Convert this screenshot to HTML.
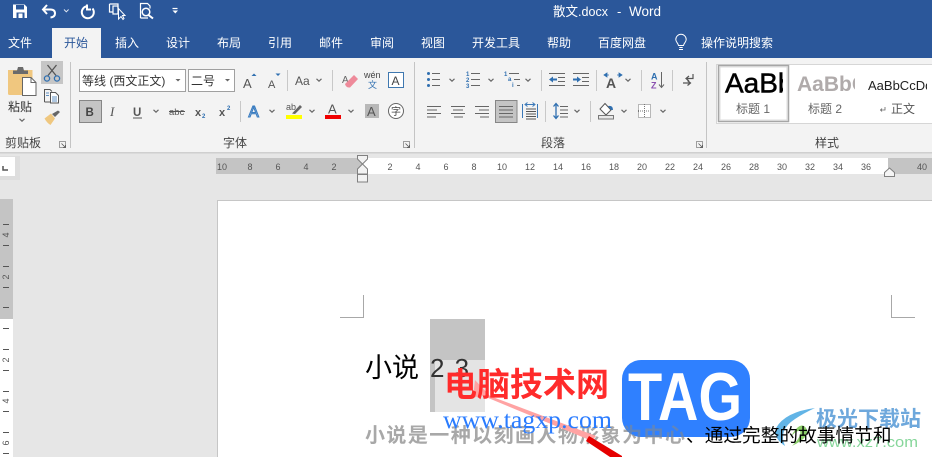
<!DOCTYPE html>
<html><head><meta charset="utf-8"><style>
html,body{margin:0;padding:0;width:932px;height:457px;overflow:hidden;background:#e6e6e6}
svg{display:block}
text{font-family:"Liberation Sans","Noto Sans CJK SC",sans-serif}
.tab{font-size:12px;fill:#fff}
.lab{font-size:12px;fill:#444}
.rn{font-size:9px;fill:#555}
</style></head><body>
<svg width="932" height="457" viewBox="0 0 932 457" xmlns="http://www.w3.org/2000/svg">
<defs>
<path id="chev" d="M-2.5 -1.2L0 1.2L2.5 -1.2" fill="none" stroke="#666" stroke-width="1.2"/>
<clipPath id="c1"><rect x="722" y="66" width="61" height="40"/></clipPath>
<clipPath id="c2"><rect x="794" y="66" width="61" height="40"/></clipPath>
<clipPath id="c3"><rect x="866" y="66" width="61" height="40"/></clipPath>
<clipPath id="tagc"><rect x="622" y="360" width="128" height="77" rx="19"/></clipPath>
</defs>
<!-- title bar -->
<rect width="932" height="58" fill="#2b579a"/>
<rect x="52" y="28" width="49" height="30" fill="#f3f3f3"/>
<rect y="58" width="932" height="94" fill="#f3f3f3"/>
<rect y="152" width="932" height="1.5" fill="#cfcfcf"/>
<!-- QAT -->
<path d="M13 4.500h11.500l2.500 2.500V18H13z" fill="#fff"/><rect x="16" y="5" width="8" height="4.500" fill="#2b579a"/><rect x="16.500" y="12.500" width="8" height="5.500" fill="#2b579a"/><rect x="18.500" y="13.500" width="4" height="4.500" fill="#fff"/>
<path d="M47 5L43 9.500L47 14M43.500 9.500H50.500Q55 9.500 55 13.500Q55 17 50.500 17.500" fill="none" stroke="#fff" stroke-width="2"/>
<path d="M64 9.500l2.300 2.300 2.300-2.300" fill="none" stroke="#dfe6f2" stroke-width="1"/>
<path d="M87 6.300A6 6 0 1 0 92.500 8.500M87 4.500V9.500H91" fill="none" stroke="#fff" stroke-width="2"/>
<path d="M109.500 4H118V8M109.500 4V12H113" fill="none" stroke="#fff" stroke-width="1.200"/><rect x="113" y="6" width="5" height="8" fill="none" stroke="#fff" stroke-width="1.200"/>
<path d="M118.500 8.500V19L121 16.500L123 19.500L124 18.500L122.500 15.500H125z" fill="#2b579a" stroke="#fff" stroke-width="1"/>
<path d="M140.500 18V3.500H147.500L150 6V8.500M140.500 18H148" fill="none" stroke="#fff" stroke-width="1.200"/><circle cx="146" cy="12" r="3.800" fill="none" stroke="#fff" stroke-width="1.500"/><path d="M148.500 15L153 18.500" stroke="#fff" stroke-width="2"/>
<path d="M172.500 8.500h5" stroke="#fff" stroke-width="1.200"/><path d="M172.500 10.500h5.500l-2.700 3z" fill="#fff"/>
<text x="553" y="16" font-size="13" fill="#fff" textLength="55" lengthAdjust="spacingAndGlyphs">散文.docx</text>
<text x="617" y="16" font-size="13" fill="#fff">-</text>
<text x="629" y="16" font-size="14" fill="#fff" textLength="32" lengthAdjust="spacingAndGlyphs">Word</text>
<!-- tabs -->
<text class="tab" x="8" y="47">文件</text>
<text class="tab" x="64" y="47" style="fill:#2b579a">开始</text>
<text class="tab" x="115" y="47">插入</text>
<text class="tab" x="166" y="47">设计</text>
<text class="tab" x="217" y="47">布局</text>
<text class="tab" x="268" y="47">引用</text>
<text class="tab" x="319" y="47">邮件</text>
<text class="tab" x="370" y="47">审阅</text>
<text class="tab" x="421" y="47">视图</text>
<text class="tab" x="472" y="47">开发工具</text>
<text class="tab" x="547" y="47">帮助</text>
<text class="tab" x="598" y="47">百度网盘</text>
<path d="M679 49.500h4M679.300 47.500h3.400M678.500 45.500C678 43 675.800 42 675.800 39.500A5.200 5.200 0 0 1 686.200 39.500C686.200 42 684 43 683.500 45.500z" fill="none" stroke="#fff" stroke-width="1"/>
<text class="tab" x="701" y="47">操作说明搜索</text>
<!-- clipboard group -->
<path d="M8 70h24.500v16h-10.500v9H9.500Q8 95 8 93.500z" fill="#f0c77f"/>
<path d="M13 70.500h4l1-3.500h5l1 3.500h4v3.500H13z" fill="#6b6b6b"/>
<path d="M22.500 77.500H31L36 82.500V95.500H22.500z" fill="#fff" stroke="#666" stroke-width="1"/>
<path d="M31 77.500V82.500H36" fill="none" stroke="#666" stroke-width="1"/>
<text x="8" y="111" font-size="12" fill="#333">粘贴</text>
<use href="#chev" x="22" y="120"/>
<rect x="41" y="61" width="22" height="23" fill="#c6c6c6"/>
<path d="M47.500 65L56 75.500M56.500 65L48 75.500" stroke="#555" stroke-width="1.300"/>
<circle cx="47" cy="78.500" r="2.600" fill="none" stroke="#2f6fb0" stroke-width="1.300"/><circle cx="57" cy="78.500" r="2.600" fill="none" stroke="#2f6fb0" stroke-width="1.300"/>
<path d="M44.500 102V89.500H50L52 91.500M50 102H44.500" fill="none" stroke="#555" stroke-width="1"/>
<path d="M50.500 92.500H55.500L58.500 95.500V103H50.500z" fill="#fff" stroke="#555" stroke-width="1"/>
<path d="M52 97h5M52 99h5M52 101h5M46 93h3M46 95.500h3" stroke="#2f6fb0" stroke-width=".8"/>
<path d="M44.500 118.500L51 113.500L55 118.500L50.500 125Q47 123 44.500 118.500z" fill="#efc77f"/><path d="M52 114L58 110.500L60 112L55 117z" fill="#666"/>
<text class="lab" x="5" y="147">剪贴板</text>
<rect x="59.500" y="141.500" width="6" height="6" fill="none" stroke="#888" stroke-width=".8"/><path d="M61.500 143.500L65.500 147.500M65.500 145v2.500H63" fill="none" stroke="#555" stroke-width=".8"/>
<rect x="70" y="62" width="1" height="86" fill="#c4c4c4"/>
<!-- font group -->
<rect x="79.500" y="69.500" width="106" height="22" fill="#fff" stroke="#a0a0a0"/>
<text x="82" y="85" font-size="12" fill="#333">等线 (西文正文)</text>
<path d="M175.500 79h5l-2.500 2.500z" fill="#666"/>
<rect x="188.500" y="69.500" width="46" height="22" fill="#fff" stroke="#a0a0a0"/>
<text x="191" y="85" font-size="12" fill="#333">二号</text>
<path d="M225 79h5l-2.500 2.500z" fill="#666"/>
<text x="243" y="88" font-size="13" fill="#555">A</text><path d="M251.500 76h5l-2.500-2.500z" fill="#2f6fb0"/>
<text x="268" y="88" font-size="11" fill="#555">A</text><path d="M275.500 73.500h5l-2.500 2.500z" fill="#2f6fb0"/>
<rect x="287" y="70" width="1" height="21" fill="#c8c8c8"/>
<text x="295" y="85" font-size="12" fill="#555">Aa</text>
<use href="#chev" x="319" y="80"/>
<rect x="332" y="70" width="1" height="21" fill="#c8c8c8"/>
<text x="342" y="83" font-size="10" fill="#666">A</text><path d="M345 84L354 75L358 79L350 87.500Q346 88 345 84z" fill="#ee8a9a"/>
<text x="364" y="78" font-size="9" fill="#444">wén</text><text x="368" y="88" font-size="9" fill="#2f6fb0">文</text>
<rect x="388.500" y="72.500" width="15" height="15" fill="#fff" stroke="#3f78b0"/><text x="391.500" y="85" font-size="12" fill="#444">A</text>
<rect x="79.500" y="100.500" width="22" height="22" fill="#c4c4c4" stroke="#868686"/>
<text x="85.500" y="116" font-size="11.500" font-weight="bold" fill="#444">B</text>
<text x="110" y="116" font-size="13" font-style="italic" fill="#555" style="font-family:'Liberation Serif',serif">I</text>
<text x="133" y="116" font-size="11.500" font-weight="bold" fill="#555">U</text><rect x="133" y="117.500" width="9" height="1" fill="#555"/>
<use href="#chev" x="156" y="111"/>
<text x="169" y="115" font-size="9.500" fill="#555">abc</text><rect x="169" y="111" width="16" height="1" fill="#555"/>
<text x="195" y="116" font-size="11" font-weight="bold" fill="#555">x</text><text x="202" y="118" font-size="6" font-weight="bold" fill="#2f6fb0">2</text>
<text x="219" y="116" font-size="11" font-weight="bold" fill="#555">x</text><text x="227" y="110" font-size="6" font-weight="bold" fill="#2f6fb0">2</text>
<rect x="240" y="101" width="1" height="21" fill="#c8c8c8"/>
<text x="248.500" y="117" font-size="15.500" fill="#fff" stroke="#3a7cc0" stroke-width="1.100">A</text>
<use href="#chev" x="272" y="111"/>
<text x="286" y="110" font-size="9" fill="#555">ab</text><path d="M292 113.500L300 105L302 107L295 114z" fill="#666"/><rect x="286" y="115" width="16" height="4" fill="#ffff00"/>
<use href="#chev" x="312" y="111"/>
<text x="328" y="113.500" font-size="13" fill="#555">A</text><rect x="325" y="115" width="16" height="4" fill="#f00000"/>
<use href="#chev" x="351" y="111"/>
<rect x="365" y="104" width="14" height="14" fill="#b8b8b8"/><text x="367" y="116" font-size="13" fill="#555">A</text>
<circle cx="396" cy="111" r="7.500" fill="#fff" stroke="#666" stroke-width="1"/><text x="391" y="115" font-size="10" fill="#444">字</text>
<text class="lab" x="223" y="147">字体</text>
<rect x="403.500" y="141.500" width="6" height="6" fill="none" stroke="#888" stroke-width=".8"/><path d="M405.500 143.500L409.500 147.500M409.500 145v2.500H407" fill="none" stroke="#555" stroke-width=".8"/>
<rect x="414" y="62" width="1" height="86" fill="#c4c4c4"/>
<!-- paragraph group -->
<g fill="#2f6fb0"><circle cx="428.500" cy="73.500" r="1.500"/><circle cx="428.500" cy="79.500" r="1.500"/><circle cx="428.500" cy="85.500" r="1.500"/></g>
<path d="M432 73.500h8M432 79.500h8M432 85.500h8" stroke="#666" stroke-width="1.100"/>
<use href="#chev" x="452" y="80"/>
<g font-size="6" font-weight="bold" fill="#2f6fb0"><text x="466" y="76">1</text><text x="466" y="82">2</text><text x="466" y="88">3</text></g>
<path d="M471 73.500h9M471 79.500h9M471 85.500h9" stroke="#666" stroke-width="1.100"/>
<use href="#chev" x="491" y="80"/>
<g font-size="6" font-weight="bold" fill="#2f6fb0"><text x="504" y="76">1</text><text x="508" y="81">a</text><text x="512" y="87">i</text></g>
<path d="M509 73.500h10M514 79.500h6M517 85.500h3" stroke="#666" stroke-width="1.100"/>
<use href="#chev" x="528" y="80"/>
<rect x="541" y="70" width="1" height="21" fill="#c8c8c8"/>
<path d="M549 79.500l4-3v2h4v2h-4v2z" fill="#2f6fb0"/><path d="M549 73.500h16M558 77.500h7M558 81.500h7M549 85.500h16" stroke="#666" stroke-width="1"/>
<path d="M581 79.500l-4-3v2h-4v2h4v2z" fill="#2f6fb0"/><path d="M573 73.500h16M582 77.500h7M582 81.500h7M573 85.500h16" stroke="#666" stroke-width="1"/>
<rect x="596" y="70" width="1" height="21" fill="#c8c8c8"/>
<text x="606" y="88" font-size="14" font-weight="bold" fill="#555">A</text>
<path d="M604 75l3-2v4zM622 75l-3-2v4zM607 75h2M617 75h2" fill="#2f6fb0" stroke="#2f6fb0" stroke-width=".8"/>
<use href="#chev" x="628" y="80"/>
<rect x="641" y="70" width="1" height="21" fill="#c8c8c8"/>
<text x="651" y="79.500" font-size="9" font-weight="bold" fill="#2f6fb0">A</text><text x="651" y="88.500" font-size="9" font-weight="bold" fill="#8a4fb0">Z</text>
<path d="M661.500 72V87M659 84.500l2.500 3 2.500-3" fill="none" stroke="#666" stroke-width="1"/>
<rect x="672" y="70" width="1" height="21" fill="#c8c8c8"/>
<path d="M693 74V78.500H687M689 76l-3 2.500 3 2.500M683 83H690M687.500 80.500L690.500 83L687.500 85.500" fill="none" stroke="#555" stroke-width="1.200"/>
<path d="M427 106.500h14M427 110h10M427 113.500h14M427 117h9" stroke="#666" stroke-width="1.100"/>
<path d="M451 106.500h14M453 110h10M451 113.500h14M454 117h9" stroke="#666" stroke-width="1.100"/>
<path d="M475 106.500h14M479 110h10M475 113.500h14M480 117h9" stroke="#666" stroke-width="1.100"/>
<rect x="495.500" y="100.500" width="21.500" height="22" fill="#c4c4c4" stroke="#868686"/>
<path d="M499 106.500h14M499 110h14M499 113.500h14M499 117h14" stroke="#666" stroke-width="1.100"/>
<path d="M522.500 104v14M537.500 104v14" stroke="#3a78b8" stroke-width="1"/>
<path d="M526 104.500h8M527.500 102.500l-2.500 2 2.500 2M532.500 102.500l2.500 2-2.500 2" fill="none" stroke="#3a78b8" stroke-width="1"/>
<path d="M526 109h10M526 111.500h10M526 114h10M526 116.500h10M526 119h10" stroke="#555" stroke-width="1"/>
<rect x="545" y="101" width="1" height="21" fill="#c8c8c8"/>
<path d="M556 104V118M553.500 106.500l2.500-3 2.500 3M553.500 115.500l2.500 3 2.500-3" fill="none" stroke="#2f6fb0" stroke-width="1.300"/>
<path d="M560 106.500h8M560 110h8M560 113.500h8M560 117h8" stroke="#666" stroke-width="1"/>
<use href="#chev" x="577" y="111"/>
<rect x="590" y="101" width="1" height="21" fill="#c8c8c8"/>
<path d="M600 109L605 103.500L611 110L606 115z" fill="#fff" stroke="#555" stroke-width="1"/><path d="M608 106Q613 105 613 110L611 110z" fill="#2f6fb0"/>
<rect x="598.500" y="115.500" width="15" height="3.500" fill="#e8e8e8" stroke="#777"/>
<use href="#chev" x="624" y="111"/>
<rect x="638.500" y="104.500" width="12" height="13" fill="#fff" stroke="#777" stroke-dasharray="1 1"/><path d="M638 111h13M644.500 104v14" stroke="#777" stroke-dasharray="1 1"/>
<use href="#chev" x="663" y="111"/>
<text class="lab" x="541" y="147">段落</text>
<rect x="696.500" y="141.500" width="6" height="6" fill="none" stroke="#888" stroke-width=".8"/><path d="M698.500 143.500L702.500 147.500M702.500 145v2.500H700" fill="none" stroke="#555" stroke-width=".8"/>
<rect x="706" y="62" width="1" height="86" fill="#c4c4c4"/>
<!-- styles -->
<rect x="716.500" y="64.500" width="216" height="59" fill="#fff" stroke="#d6d6d6"/>
<rect x="718.500" y="65.500" width="70" height="56" fill="#fff" stroke="#a6a6a6" stroke-width="1.500"/>
<rect x="720" y="67" width="67" height="53" fill="none" stroke="#dcdcdc" stroke-width="1"/>
<text x="725" y="92.500" font-size="28" fill="#000" clip-path="url(#c1)" stroke="#000" stroke-width=".5">AaBbC</text>
<text x="736" y="113" font-size="12" fill="#666">标题 1</text>
<text x="797" y="91" font-size="21" font-weight="bold" fill="#b0abab" clip-path="url(#c2)">AaBbC</text>
<text x="808" y="113" font-size="12" fill="#666">标题 2</text>
<text x="868" y="90" font-size="13" fill="#222" clip-path="url(#c3)">AaBbCcDd</text>
<path d="M885 107v3h-4M882 108.500l-1.500 1.500 1.500 1.500" fill="none" stroke="#666" stroke-width=".8"/>
<text x="891" y="113" font-size="12" fill="#555">正文</text>
<text class="lab" x="815" y="147">样式</text>
<!-- horizontal ruler -->
<rect x="0" y="153.500" width="932" height="304" fill="#e6e6e6"/>
<rect x="0" y="156" width="20" height="24" fill="#dedede"/>
<rect x="0" y="157" width="15" height="19" fill="#fff"/>
<path d="M3 166V170H8" fill="none" stroke="#555" stroke-width="1.500"/>
<rect x="216" y="158" width="146" height="16" fill="#c4c4c4"/>
<rect x="362" y="158" width="526" height="16" fill="#fff"/>
<rect x="888" y="158" width="44" height="16" fill="#c4c4c4"/>
<g>
<text class="rn" x="222" y="170" text-anchor="middle">10</text><text class="rn" x="250" y="170" text-anchor="middle">8</text><text class="rn" x="278" y="170" text-anchor="middle">6</text><text class="rn" x="306" y="170" text-anchor="middle">4</text><text class="rn" x="334" y="170" text-anchor="middle">2</text>
<text class="rn" x="390" y="170" text-anchor="middle">2</text><text class="rn" x="418" y="170" text-anchor="middle">4</text><text class="rn" x="446" y="170" text-anchor="middle">6</text><text class="rn" x="474" y="170" text-anchor="middle">8</text><text class="rn" x="502" y="170" text-anchor="middle">10</text><text class="rn" x="530" y="170" text-anchor="middle">12</text><text class="rn" x="558" y="170" text-anchor="middle">14</text><text class="rn" x="586" y="170" text-anchor="middle">16</text><text class="rn" x="614" y="170" text-anchor="middle">18</text><text class="rn" x="642" y="170" text-anchor="middle">20</text><text class="rn" x="670" y="170" text-anchor="middle">22</text><text class="rn" x="698" y="170" text-anchor="middle">24</text><text class="rn" x="726" y="170" text-anchor="middle">26</text><text class="rn" x="754" y="170" text-anchor="middle">28</text><text class="rn" x="782" y="170" text-anchor="middle">30</text><text class="rn" x="810" y="170" text-anchor="middle">32</text><text class="rn" x="838" y="170" text-anchor="middle">34</text><text class="rn" x="866" y="170" text-anchor="middle">36</text><text class="rn" x="922" y="170" text-anchor="middle">40</text>
</g>
<path d="M357.500 155.500H367.500V159L362.500 164L357.500 159z" fill="#f2f2f2" stroke="#808080"/>
<path d="M362.500 164L367.500 169V174H357.500V169z" fill="#f2f2f2" stroke="#808080"/>
<rect x="357.500" y="174.500" width="10" height="7.500" fill="#f2f2f2" stroke="#808080"/>
<path d="M889.500 168L894.500 172.500V176.500H884.500V172.500z" fill="#f5f5f5" stroke="#808080"/>
<!-- vertical ruler -->
<rect x="0" y="199" width="13" height="120" fill="#c4c4c4"/>
<rect x="0" y="319" width="13" height="138" fill="#fff"/>
<path d="M3 224.500h6M3 245.500h6M3 266.500h6M3 287.500h6M3 307.500h6M3 328.500h6M3 349.500h6M3 370.500h6M3 391.500h6M3 411.500h6M3 432.500h6M3 453.500h6" stroke="#555" stroke-width="1"/>
<text class="rn" transform="translate(9,235) rotate(-90)" text-anchor="middle">4</text>
<text class="rn" transform="translate(9,277) rotate(-90)" text-anchor="middle">2</text>
<text class="rn" transform="translate(9,360) rotate(-90)" text-anchor="middle">2</text>
<text class="rn" transform="translate(9,401) rotate(-90)" text-anchor="middle">4</text>
<text class="rn" transform="translate(9,443) rotate(-90)" text-anchor="middle">6</text>
<!-- page -->
<rect x="217.500" y="200.500" width="716" height="258" fill="#fff" stroke="#c6c6c6"/>
<path d="M340 317.500H363.500V295M891.500 295V317.500H915" fill="none" stroke="#a8a8a8" stroke-width="1"/>
<rect x="430" y="319" width="55" height="93" fill="#c4c4c4"/>
<rect x="435" y="360" width="50" height="52" fill="#e4e4e4"/>
<text x="365" y="377" font-size="27" fill="#000">小说</text>
<text x="430" y="377" font-size="26" fill="#333" letter-spacing="1.500">2.3</text>
<text x="365" y="442" font-size="20" font-weight="bold" fill="#a8a8a8" textLength="320">小说是一种以刻画人物形象为中心</text>
<!-- arrow -->
<path d="M490 396L475 380L473 398L481 395L592 441L596 436z" fill="#ffa3a3"/>
<path d="M589 436L622 456V457H610L586 441z" fill="#e60000"/>
<!-- watermark -->
<text x="444" y="396" font-size="33" font-weight="bold" fill="#ff2b2b">电脑技术网</text>
<text x="443" y="428" font-size="25" fill="#2a7cff" textLength="169" lengthAdjust="spacingAndGlyphs" style="font-family:'Liberation Serif',serif">www.tagxp.com</text>
<rect x="622" y="360" width="128" height="77" rx="19" fill="#2f80ff"/>
<text x="628" y="420" font-size="68" font-weight="bold" fill="#fff" textLength="114" lengthAdjust="spacingAndGlyphs">TAG</text>
<text x="365" y="442" font-size="20" font-weight="bold" fill="#5f85bd" textLength="320" clip-path="url(#tagc)">小说是一种以刻画人物形象为中心</text>
<!-- logo -->
<path d="M815 408Q785 412 776 428Q773 438 785 446Q778 430 795 419Q804 413 815 408z" fill="#62b4e6"/>
<path d="M790 438Q800 420 806 428Q812 436 792 446Q802 436 800 431Q796 430 790 438z" fill="#8ccf6a"/>
<text x="816" y="426" font-size="21" font-weight="bold" fill="#6ea8dc">极光下载站</text>
<text x="817" y="447" font-size="15" fill="#86d69a" textLength="101" lengthAdjust="spacingAndGlyphs">www.xz7.com</text>
<text x="686" y="442" font-size="18.700" fill="#000">、通过完整的故事情节和</text>
</svg>
</body></html>
